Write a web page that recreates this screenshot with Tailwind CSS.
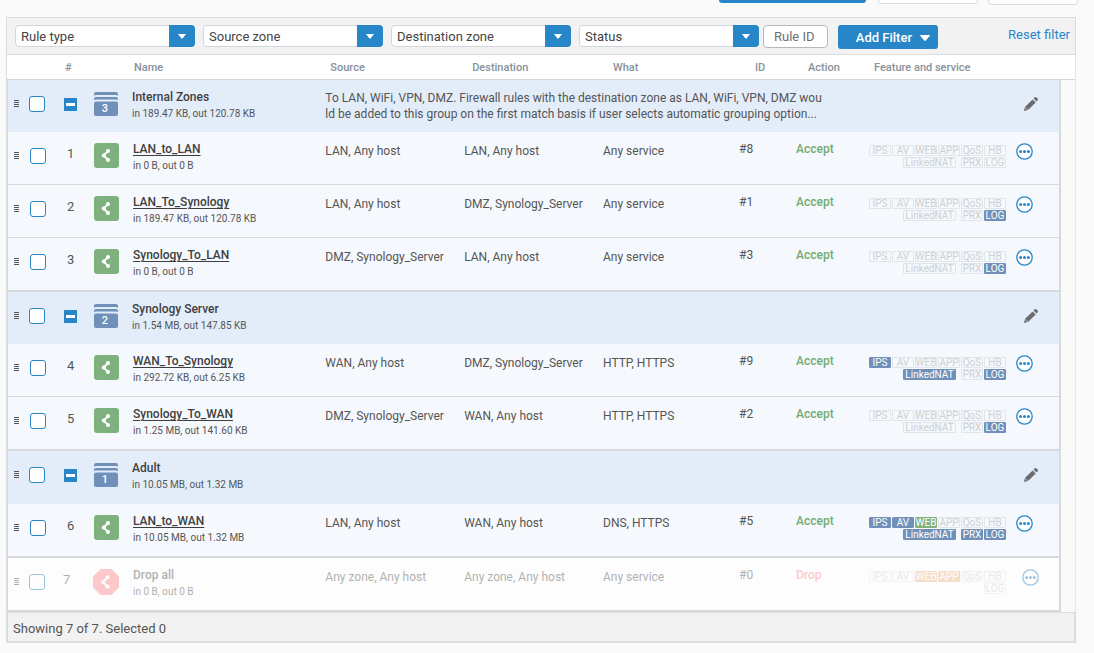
<!DOCTYPE html>
<html lang="en">
<head>
    <meta charset="UTF-8">
    <meta name="viewport" content="width=device-width, initial-scale=1.0">
    <title>Firewall rules</title>
    <script src="https://cdn.jsdelivr.net/npm/@tailwindcss/browser@4"></script>
</head>
<body class="bg-[#fafafa] min-h-screen font-['Roboto',sans-serif] text-xs text-[#555]">

    <!-- Icons -->
    <svg class="hidden">
        <symbol id="icon-grip" viewBox="0 0 5 8">
            <path d="M0 .5h5M0 2.500h5M0 4.500h5M0 6.500h5" stroke="#555" stroke-width="1"/>
        </symbol>
        <symbol id="icon-share" viewBox="0 0 25 25">
            <path d="M14.200 7.800 9.500 12.500l4.700 4.700" fill="none" stroke="#fff" stroke-width="1.900"/>
            <circle cx="14" cy="8" r="2" fill="#fff"/>
            <circle cx="9.700" cy="12.500" r="2" fill="#fff"/>
            <circle cx="14" cy="17" r="2" fill="#fff"/>
        </symbol>
        <symbol id="icon-pencil" viewBox="0 0 14 14">
            <path d="M0 14l.9-4 7.700-7.600 3.100 3.100L4 13.100zM9.500 1.500l1-1q1-.9 2 0l1 1q.9 1 0 2l-1 1z" fill="#6b6b6b"/>
            <path d="M1 10.200l2.800 2.800" stroke="#e3edfa" stroke-width=".7"/>
        </symbol>
        <symbol id="icon-more" viewBox="0 0 17 17">
            <circle cx="8.500" cy="8.500" r="7.700" fill="#fff" stroke="#2786c8" stroke-width="1.300"/>
            <circle cx="4.600" cy="8.500" r="1.500" fill="#2786c8"/>
            <circle cx="8.500" cy="8.500" r="1.500" fill="#2786c8"/>
            <circle cx="12.400" cy="8.500" r="1.500" fill="#2786c8"/>
        </symbol>
        <symbol id="icon-stack" viewBox="0 0 24 24">
            <path d="M0 4V2q0-2 2-2h20q2 0 2 2v2q-.3-1-2-1H2Q.3 3 0 4z" fill="#7090b9"/>
            <path d="M0 8.500V7q0-2 2-2h20q2 0 2 2v1.500q-.3-1-2-1H2q-1.700 0-2 1z" fill="#7090b9"/>
            <rect y="9.500" width="24" height="14.500" rx="2" fill="#7090b9"/>
        </symbol>
    </svg>

    <!-- Page actions -->
    <div class="flex justify-end items-start h-[17px] pr-4">
        <div class="w-[147px] h-[3px] rounded-b bg-[#2786c8] mr-3"></div>
        <div class="w-[100px] h-1 rounded-b border border-t-0 border-[#ddd] bg-white mr-2.5"></div>
        <div class="w-[90px] h-[5px] rounded-b border border-t-0 border-[#ddd] bg-white"></div>
    </div>

    <div class="ml-1.5 mr-[18px]">
        <!-- Filters -->
        <div class="flex items-start bg-[#f2f2f2] border border-[#dadcdd] pt-[7px] pb-[5px] pl-2 pr-[5px]">
            <div id="filters" class="flex gap-2"></div>
            <input type="text" aria-label="Rule ID" placeholder="Rule ID"
                   class="ml-1 w-[65px] h-[23px] rounded border border-[#b5b9bc] bg-white px-2.5 text-[13px] placeholder:text-[#6f6f6f]">
            <button type="button" class="ml-2.5 w-[100px] h-6 rounded-[3px] bg-[#2786c8] text-white text-[13px] font-medium flex items-center justify-end gap-2 pt-px pr-2">
                Add Filter
                <svg class="w-2.5 h-1.5" viewBox="0 0 10 6"><path d="M.5 0h9q.7.200.200.900L5.500 5.700q-.5.500-1 0L.3.900Q-.2.200.5 0z" fill="#fff"/></svg>
            </button>
            <a href="#" class="ml-auto text-[13px] leading-5 text-[#2786c8]">Reset filter</a>
        </div>

        <!-- Rules -->
        <table class="w-full table-fixed border-separate border-spacing-0 border-x border-l-[#dadcdd] border-r-[#e6e6e6]">
            <colgroup>
                <col class="w-[50px]">
                <col class="w-9">
                <col class="w-[39px]">
                <col>
                <col class="w-[13%]">
                <col class="w-[13%]">
                <col class="w-[136px]">
                <col class="w-[57px]">
                <col class="w-[73px]">
                <col class="w-[140px]">
                <col class="w-[52px]">
                <col class="w-3.5">
            </colgroup>
            <thead>
                <tr class="h-[25px] bg-white text-left text-[11px] text-[#87929a] *:border-b *:border-[#d3d6d8] *:font-medium *:pt-0.5">
                    <th></th>
                    <th class="pl-2">#</th>
                    <th></th>
                    <th class="pl-0.5">Name</th>
                    <th class="pl-[5px]">Source</th>
                    <th class="pl-2">Destination</th>
                    <th class="pl-2.5">What</th>
                    <th class="pl-4">ID</th>
                    <th class="pl-3">Action</th>
                    <th class="pl-[5px]">Feature and service</th>
                    <th></th>
                    <th></th>
                </tr>
            </thead>
            <tbody id="rules"></tbody>
        </table>

        <!-- Footer -->
        <div class="bg-[#f2f2f2] border-2 border-t border-[#dadcdd] h-[31px] flex items-center pt-1 pl-[5px] text-[13px]">Showing 7 of 7. Selected 0</div>
    </div>

    <script>
        const filters = ['Rule type', 'Source zone', 'Destination zone', 'Status'];

        const rows = [
            { group: 'Internal Zones', count: 3, traffic: 'in 189.47 KB, out 120.78 KB',
              desc: 'To LAN, WiFi, VPN, DMZ. Firewall rules with the destination zone as LAN, WiFi, VPN, DMZ wou<br>ld be added to this group on the first match basis if user selects automatic grouping option...' },
            { n: 1, name: 'LAN_to_LAN', traffic: 'in 0 B, out 0 B', src: 'LAN, Any host', dst: 'LAN, Any host', what: 'Any service', id: 8, blue: [] },
            { n: 2, name: 'LAN_To_Synology', traffic: 'in 189.47 KB, out 120.78 KB', src: 'LAN, Any host', dst: 'DMZ, Synology_Server', what: 'Any service', id: 1, blue: ['LOG'] },
            { n: 3, name: 'Synology_To_LAN', traffic: 'in 0 B, out 0 B', src: 'DMZ, Synology_Server', dst: 'LAN, Any host', what: 'Any service', id: 3, blue: ['LOG'], last: true },
            { group: 'Synology Server', count: 2, traffic: 'in 1.54 MB, out 147.85 KB', desc: '' },
            { n: 4, name: 'WAN_To_Synology', traffic: 'in 292.72 KB, out 6.25 KB', src: 'WAN, Any host', dst: 'DMZ, Synology_Server', what: 'HTTP, HTTPS', id: 9, blue: ['IPS', 'LinkedNAT', 'LOG'] },
            { n: 5, name: 'Synology_To_WAN', traffic: 'in 1.25 MB, out 141.60 KB', src: 'DMZ, Synology_Server', dst: 'WAN, Any host', what: 'HTTP, HTTPS', id: 2, blue: ['LOG'], last: true },
            { group: 'Adult', count: 1, traffic: 'in 10.05 MB, out 1.32 MB', desc: '', height: 'h-[53px]' },
            { n: 6, name: 'LAN_to_WAN', traffic: 'in 10.05 MB, out 1.32 MB', src: 'LAN, Any host', dst: 'WAN, Any host', what: 'DNS, HTTPS', id: 5, blue: ['IPS', 'AV', 'LinkedNAT', 'PRX', 'LOG'], green: ['WEB'], last: true },
            { n: 7, name: 'Drop all', traffic: 'in 0 B, out 0 B', src: 'Any zone, Any host', dst: 'Any zone, Any host', what: 'Any service', id: 0, blue: [], orange: ['WEB', 'APP'], drop: true, last: true }
        ];

        document.getElementById('filters').innerHTML = filters.map(label => `
            <div class="relative">
                <select aria-label="${label}" class="appearance-none block w-[180px] h-[22px] rounded border border-[#d3d6d8] bg-white pt-0.5 pl-[5px] pr-7 text-[13px] leading-[18px] text-[#444]">
                    <option>${label}</option>
                </select>
                <span class="absolute right-0 top-0 w-[26px] h-[22px] rounded-r bg-[#2786c8] flex items-center justify-center pointer-events-none">
                    <svg class="w-2 h-[5px]" viewBox="0 0 8 5"><path d="M0 0h8L4.500 4.500q-.5.500-1 0z" fill="#fff"/></svg>
                </span>
            </div>`).join('');

        function badge(row, label) {
            let color = 'border-[#e2e5e7] text-[#cdd0d2]';
            if (row.blue.includes(label)) color = 'border-[#7090b9] bg-[#7090b9] text-white';
            if (row.green && row.green.includes(label)) color = 'border-[#80b280] bg-[#80b280] text-white';
            if (row.orange && row.orange.includes(label)) color = 'border-[#e9bb86] bg-[#e9bb86] text-white';
            const width = label === 'LinkedNAT' ? 'w-[53px] mr-1' : 'w-[22px]';
            return `<span class="${width} ${color} h-[11px] rounded-[1px] border flex items-center justify-center text-[10px] leading-none">${label}</span>`;
        }

        function badges(row) {
            const second = row.drop ? ['LOG'] : ['LinkedNAT', 'PRX', 'LOG'];
            return `
                <div class="flex gap-px">${['IPS', 'AV', 'WEB', 'APP', 'QoS', 'HB'].map(b => badge(row, b)).join('')}</div>
                <div class="flex gap-px justify-end mt-px w-[137px]">${second.map(b => badge(row, b)).join('')}</div>`;
        }

        function selector(name, gap, fade) {
            return `
                <td class="border-l border-[#dadcdd] pt-4">
                    <div class="flex items-center ${gap} pl-1.5 ${fade}">
                        <svg class="w-[5px] h-2"><use href="#icon-grip"/></svg>
                        <input type="checkbox" aria-label="${name}" class="appearance-none block w-4 h-4 rounded-[3px] border border-[#2786c8] bg-white">
                    </div>
                </td>`;
        }

        const gutter = '<td class="bg-[#fafaf8]"></td>';

        function groupRow(row) {
            return `
            <tr class="${row.height || 'h-[52px]'} bg-[#e3edfa] align-top">
                ${selector(row.group, 'gap-2.5', '')}
                <td class="pt-[18px] pl-[7px]">
                    <button type="button" aria-label="${row.group}" class="block w-[13px] h-[13px] bg-[#2786c8] px-0.5">
                        <span class="block h-[3px] bg-white"></span>
                    </button>
                </td>
                <td class="pt-3 pl-px">
                    <div class="relative w-6 h-6">
                        <svg class="w-6 h-6"><use href="#icon-stack"/></svg>
                        <span class="absolute inset-x-0 bottom-0 pr-0.5 text-center text-[11px] leading-[14px] font-medium text-white">${row.count}</span>
                    </div>
                </td>
                <td class="pt-[9px]">
                    <div class="font-medium leading-4 text-[#3f3f3f]">${row.group}</div>
                    <div class="mt-px text-[10px] leading-4">${row.traffic}</div>
                </td>
                <td colspan="5" class="pt-2.5 leading-4 whitespace-nowrap">${row.desc}</td>
                <td></td>
                <td class="pt-[17px] pl-[15px] border-r-2 border-[#dadcdd]">
                    <button type="button" aria-label="${row.group}" class="block"><svg class="w-3.5 h-3.5"><use href="#icon-pencil"/></svg></button>
                </td>
                ${gutter}
            </tr>`;
        }

        function ruleRow(row) {
            const fade = row.drop ? 'opacity-45' : '';
            const line = row.last ? 'h-[54px] *:not-last:border-b-2' : 'h-[53px] *:not-last:border-b';
            const icon = row.drop
                ? '<svg class="-ml-px w-[26px] h-[26px]" viewBox="0 0 25 25"><path d="M7.300 0h10.400L25 7.300v10.400L17.700 25H7.300L0 17.700V7.300z" fill="#ff8a8e"/><use href="#icon-share" width="25" height="25"/></svg>'
                : '<div class="w-[25px] h-[25px] rounded-[3px] bg-[#7fb17f]"><svg class="w-[25px] h-[25px]"><use href="#icon-share"/></svg></div>';
            const name = row.drop
                ? `<div class="font-medium leading-4">${row.name}</div>`
                : `<a href="#" class="block font-medium leading-4 text-[#3f3f3f] underline underline-offset-2">${row.name}</a>`;
            return `
            <tr class="${line} ${row.drop ? 'bg-[#fdfdfd]' : 'bg-[#f5f9fd]'} align-top *:border-[#d7dadc]">
                ${selector(row.name, row.drop ? 'gap-2.5' : 'gap-[11px]', fade)}
                <td class="pt-3.5 text-[13px] leading-4"><div class="${fade} ${row.drop ? 'pl-1.5' : 'pl-2.5'}">${row.n}</div></td>
                <td class="pt-[11px] pl-px"><div class="${fade}">${icon}</div></td>
                <td class="pt-[9px] pl-px">
                    <div class="${fade}">
                        ${name}
                        <div class="mt-px text-[10px] leading-4">${row.traffic}</div>
                    </div>
                </td>
                <td class="pt-[11px] leading-4 whitespace-nowrap"><div class="${fade}">${row.src}</div></td>
                <td class="pt-[11px] leading-4 whitespace-nowrap"><div class="${fade}">${row.dst}</div></td>
                <td class="pt-[11px] leading-4"><div class="${fade}">${row.what}</div></td>
                <td class="pt-[9px] leading-4"><div class="${fade}">#${row.id}</div></td>
                <td class="pt-[9px] leading-4 font-medium"><div class="${fade} ${row.drop ? 'text-[#ff8a8e]' : 'text-[#72ab72]'}">${row.drop ? 'Drop' : 'Accept'}</div></td>
                <td class="pt-[13px]"><div class="${fade}">${badges(row)}</div></td>
                <td class="pt-[11px] border-r-2 ${row.drop ? 'pl-[13px]' : 'pl-[7px]'}">
                    <button type="button" aria-label="${row.name}" class="block ${fade}"><svg class="w-[17px] h-[17px]"><use href="#icon-more"/></svg></button>
                </td>
                ${gutter}
            </tr>`;
        }

        document.getElementById('rules').innerHTML = rows.map(row => row.group ? groupRow(row) : ruleRow(row)).join('');
    </script>
</body>
</html>
